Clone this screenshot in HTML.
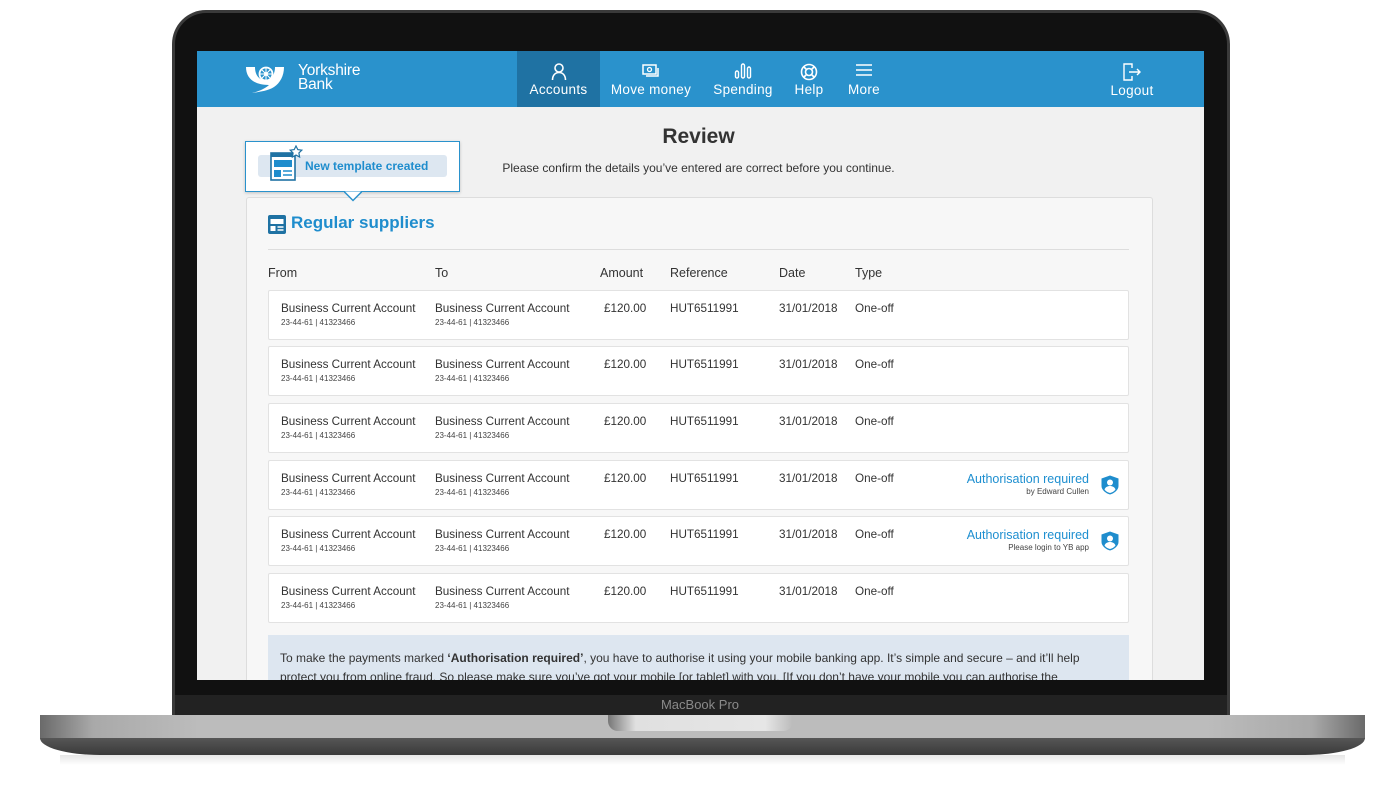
<!DOCTYPE html>
<html><head><meta charset="utf-8"><style>
*{margin:0;padding:0;box-sizing:border-box}
body{width:1400px;height:800px;background:#fff;position:relative;overflow:hidden;font-family:"Liberation Sans",sans-serif}
.abs{position:absolute}
#lid{left:172px;top:10px;width:1058px;height:706px;background:#3a3a3a;border-radius:34px 34px 0 0}
#lidin{left:175px;top:13px;width:1052px;height:703px;background:#111;border-radius:31px 31px 0 0}
#chin{left:175px;top:695px;width:1052px;height:21px;background:#222}
#mb{left:0;width:1400px;top:697px;text-align:center;color:#8a8a8a;font-size:13px}
#base{left:40px;top:715px;width:1325px;height:24px;background:linear-gradient(90deg,#6a6a6a 0%,#a9a9a9 4%,#bcbcbc 12%,#bcbcbc 88%,#a9a9a9 96%,#6a6a6a 100%)}
#base2{left:40px;top:738px;width:1325px;height:17px;background:linear-gradient(#565656,#3a3a3a);border-radius:0 0 60px 60px/0 0 17px 17px}
#shadow{left:60px;top:755px;width:1285px;height:10px;background:linear-gradient(#e6e6e6,#fff)}
#notch{left:608px;top:715px;width:185px;height:16px;background:linear-gradient(90deg,#777,#e0e0e0 15%,#e6e6e6 85%,#bbb);border-radius:0 0 10px 10px}
#screen{left:197px;top:51px;width:1007px;height:629px;background:#f1f1f1;overflow:hidden}
#hdr{left:0;top:0;width:1007px;height:56px;background:#2a92cc}
.nav{position:absolute;top:0;height:56px;color:#fff;font-size:13.5px;text-align:center;letter-spacing:.3px}
.nav span{position:absolute;left:0;right:0;top:31px}
.nav svg{position:absolute;top:12px;left:50%;transform:translateX(-50%)}
.t{position:absolute;font-size:11.7px;color:#333;white-space:nowrap}
.s{position:absolute;font-size:8px;color:#444;white-space:nowrap}
.row{position:absolute;left:71px;width:861px;height:50px;background:#fff;border:1px solid #e2e2e2;border-radius:2px}
.auth{position:absolute;right:39px;top:11px;text-align:right;color:#1e8fd0;font-size:12.5px}
.auth div{font-size:8px;color:#444;margin-top:1px}
</style></head><body>
<div class="abs" id="shadow"></div>
<div class="abs" id="lid"></div>
<div class="abs" id="lidin"></div>
<div class="abs" id="chin"></div>
<div class="abs" id="mb">MacBook Pro</div>
<div class="abs" id="base"></div>
<div class="abs" id="base2"></div>
<div class="abs" id="notch"></div>

<div class="abs" id="screen">
 <div class="abs" id="hdr"></div>
 <svg class="abs" style="left:48px;top:14px" width="46" height="30" viewBox="0 0 46 30">
  <path d="M1 2h9c0 8 4 13 10 13s10-5 10-13h9c0 9-4 16-10 20-6 4-16 5-22 6 8-2 14-5 17-8C10 20 1 14 1 2z" fill="#fff"/>
  <circle cx="21" cy="9" r="6.5" fill="none" stroke="#fff" stroke-width="1.8"/>
  <circle cx="21" cy="9" r="2" fill="#fff"/>
  <path d="M21 3v12M15 9h12M17 5l8 8M25 5l-8 8" stroke="#fff" stroke-width="1"/>
 </svg>
 <div class="abs" style="left:101px;top:13px;color:#fff;font-size:15.5px;line-height:14px;letter-spacing:-.2px">Yorkshire<br>Bank</div>
 <div class="nav" style="left:320px;width:83px;background:#1f72a3">
  <svg width="16" height="18" viewBox="0 0 16 18"><circle cx="8" cy="5" r="4" fill="none" stroke="#fff" stroke-width="1.6"/><path d="M1.5 17c0-5 3-7.5 6.5-7.5s6.5 2.5 6.5 7.5" fill="none" stroke="#fff" stroke-width="1.6"/></svg>
  <span>Accounts</span></div>
 <div class="nav" style="left:408px;width:92px">
  <svg width="18" height="16" viewBox="0 0 18 16"><rect x="1" y="2" width="13" height="9" fill="none" stroke="#fff" stroke-width="1.5"/><circle cx="7.5" cy="6.5" r="2" fill="none" stroke="#fff" stroke-width="1.3"/><path d="M16 5v8H4" fill="none" stroke="#fff" stroke-width="1.5"/></svg>
  <span>Move money</span></div>
 <div class="nav" style="left:512px;width:68px">
  <svg width="18" height="16" viewBox="0 0 18 16"><rect x="1.5" y="8" width="3" height="7" rx="1.5" fill="none" stroke="#fff" stroke-width="1.4"/><rect x="7.5" y="1" width="3" height="14" rx="1.5" fill="none" stroke="#fff" stroke-width="1.4"/><rect x="13.5" y="4" width="3" height="11" rx="1.5" fill="none" stroke="#fff" stroke-width="1.4"/></svg>
  <span>Spending</span></div>
 <div class="nav" style="left:592px;width:40px">
  <svg width="18" height="18" viewBox="0 0 18 18"><circle cx="9" cy="9" r="7.5" fill="none" stroke="#fff" stroke-width="1.6"/><circle cx="9" cy="9" r="3.5" fill="none" stroke="#fff" stroke-width="1.6"/><path d="M4 4l2.5 2.5M14 4l-2.5 2.5M4 14l2.5-2.5M14 14l-2.5-2.5" stroke="#fff" stroke-width="1.6"/></svg>
  <span>Help</span></div>
 <div class="nav" style="left:645px;width:44px">
  <svg width="18" height="14" viewBox="0 0 18 14"><path d="M1 2h16M1 7h16M1 12h16" stroke="#fff" stroke-width="1.5"/></svg>
  <span>More</span></div>
 <div class="nav" style="left:910px;width:50px">
  <svg width="20" height="18" viewBox="0 0 20 18"><path d="M10 5V1H2v16h8v-4" fill="none" stroke="#fff" stroke-width="1.4"/><path d="M7 9h11M15 6l3 3-3 3" fill="none" stroke="#fff" stroke-width="1.4"/></svg>
  <span style="top:32px">Logout</span></div>

 <div class="abs" style="left:0;width:1003px;top:74px;text-align:center;font-size:21px;font-weight:bold;color:#333">Review</div>
 <div class="abs" style="left:0;width:1003px;top:110px;text-align:center;font-size:12px;color:#333">Please confirm the details you’ve entered are correct before you continue.</div>

 <div class="abs" style="left:49px;top:146px;width:907px;height:500px;background:#f7f7f7;border:1px solid #ddd;border-radius:3px"></div>
 <svg class="abs" style="left:71px;top:164px" width="18" height="19" viewBox="0 0 18 19"><rect x="0" y="0" width="18" height="19" rx="2" fill="#1f72a3"/><rect x="2.5" y="4" width="13" height="5" fill="#fff"/><rect x="2.5" y="11" width="5" height="5" fill="#fff"/><path d="M9.5 12h6M9.5 15h6" stroke="#fff" stroke-width="1.4"/></svg>
 <div class="abs" style="left:94px;top:162px;font-size:17px;font-weight:bold;color:#1f8dcd">Regular suppliers</div>
 <div class="abs" style="left:71px;top:198px;width:861px;height:1px;background:#ddd"></div>

 <div class="t" style="left:71px;top:215px;font-size:12.5px">From</div>
 <div class="t" style="left:238px;top:215px;font-size:12.5px">To</div>
 <div class="t" style="left:403px;top:215px;font-size:12.5px">Amount</div>
 <div class="t" style="left:473px;top:215px;font-size:12.5px">Reference</div>
 <div class="t" style="left:582px;top:215px;font-size:12.5px">Date</div>
 <div class="t" style="left:658px;top:215px;font-size:12.5px">Type</div>

 <div class="row" style="top:239px"><div class="t" style="left:12px;top:11px">Business Current Account</div><div class="s" style="left:12px;top:27px">23-44-61 | 41323466</div><div class="t" style="left:166px;top:11px">Business Current Account</div><div class="s" style="left:166px;top:27px">23-44-61 | 41323466</div><div class="t" style="left:335px;top:11px">£120.00</div><div class="t" style="left:401px;top:11px">HUT6511991</div><div class="t" style="left:510px;top:11px">31/01/2018</div><div class="t" style="left:586px;top:11px">One-off</div></div>
 <div class="row" style="top:295px"><div class="t" style="left:12px;top:11px">Business Current Account</div><div class="s" style="left:12px;top:27px">23-44-61 | 41323466</div><div class="t" style="left:166px;top:11px">Business Current Account</div><div class="s" style="left:166px;top:27px">23-44-61 | 41323466</div><div class="t" style="left:335px;top:11px">£120.00</div><div class="t" style="left:401px;top:11px">HUT6511991</div><div class="t" style="left:510px;top:11px">31/01/2018</div><div class="t" style="left:586px;top:11px">One-off</div></div>
 <div class="row" style="top:352px"><div class="t" style="left:12px;top:11px">Business Current Account</div><div class="s" style="left:12px;top:27px">23-44-61 | 41323466</div><div class="t" style="left:166px;top:11px">Business Current Account</div><div class="s" style="left:166px;top:27px">23-44-61 | 41323466</div><div class="t" style="left:335px;top:11px">£120.00</div><div class="t" style="left:401px;top:11px">HUT6511991</div><div class="t" style="left:510px;top:11px">31/01/2018</div><div class="t" style="left:586px;top:11px">One-off</div></div>
 <div class="row" style="top:409px"><div class="t" style="left:12px;top:11px">Business Current Account</div><div class="s" style="left:12px;top:27px">23-44-61 | 41323466</div><div class="t" style="left:166px;top:11px">Business Current Account</div><div class="s" style="left:166px;top:27px">23-44-61 | 41323466</div><div class="t" style="left:335px;top:11px">£120.00</div><div class="t" style="left:401px;top:11px">HUT6511991</div><div class="t" style="left:510px;top:11px">31/01/2018</div><div class="t" style="left:586px;top:11px">One-off</div>
  <div class="auth">Authorisation required<div>by Edward Cullen</div></div>
  <svg class="abs" style="left:832px;top:14px" width="18" height="20" viewBox="0 0 18 20"><path d="M9 0.5L17.5 3.5V11C17.5 15 13 18.5 9 19.5 5 18.5 0.5 15 0.5 11V3.5z" fill="#1f8dcd"/><circle cx="9" cy="7.5" r="3" fill="#fff"/><path d="M3.5 14.5c1-2.5 3-3.5 5.5-3.5s4.5 1 5.5 3.5C13 16.5 11 17.5 9 18 7 17.5 5 16.5 3.5 14.5z" fill="#fff"/></svg></div>
 <div class="row" style="top:465px"><div class="t" style="left:12px;top:11px">Business Current Account</div><div class="s" style="left:12px;top:27px">23-44-61 | 41323466</div><div class="t" style="left:166px;top:11px">Business Current Account</div><div class="s" style="left:166px;top:27px">23-44-61 | 41323466</div><div class="t" style="left:335px;top:11px">£120.00</div><div class="t" style="left:401px;top:11px">HUT6511991</div><div class="t" style="left:510px;top:11px">31/01/2018</div><div class="t" style="left:586px;top:11px">One-off</div>
  <div class="auth">Authorisation required<div>Please login to YB app</div></div>
  <svg class="abs" style="left:832px;top:14px" width="18" height="20" viewBox="0 0 18 20"><path d="M9 0.5L17.5 3.5V11C17.5 15 13 18.5 9 19.5 5 18.5 0.5 15 0.5 11V3.5z" fill="#1f8dcd"/><circle cx="9" cy="7.5" r="3" fill="#fff"/><path d="M3.5 14.5c1-2.5 3-3.5 5.5-3.5s4.5 1 5.5 3.5C13 16.5 11 17.5 9 18 7 17.5 5 16.5 3.5 14.5z" fill="#fff"/></svg></div>
 <div class="row" style="top:522px"><div class="t" style="left:12px;top:11px">Business Current Account</div><div class="s" style="left:12px;top:27px">23-44-61 | 41323466</div><div class="t" style="left:166px;top:11px">Business Current Account</div><div class="s" style="left:166px;top:27px">23-44-61 | 41323466</div><div class="t" style="left:335px;top:11px">£120.00</div><div class="t" style="left:401px;top:11px">HUT6511991</div><div class="t" style="left:510px;top:11px">31/01/2018</div><div class="t" style="left:586px;top:11px">One-off</div></div>

 <div class="abs" style="left:71px;top:584px;width:861px;height:60px;background:#dde6f0;padding:14px 12px;font-size:12px;color:#333;line-height:19px">To make the payments marked <b>‘Authorisation required’</b>, you have to authorise it using your mobile banking app. It’s simple and secure – and it’ll help protect you from online fraud. So please make sure you’ve got your mobile [or tablet] with you. [If you don’t have your mobile you can authorise the</div>

 <div class="abs" style="left:48px;top:90px;width:215px;height:51px;background:#fff;border:1.5px solid #2a92cc;box-shadow:0 1px 3px rgba(0,0,0,.2)"></div>
 <svg class="abs" style="left:147px;top:140px" width="18" height="11" viewBox="0 0 18 11"><path d="M0 0.5L9 9.5 18 0.5" fill="#fff" stroke="#2a92cc" stroke-width="1.5"/></svg>
 <div class="abs" style="left:61px;top:104px;width:189px;height:22px;background:#dde7f1;border-radius:3px"></div>
 <svg class="abs" style="left:73px;top:94px" width="34" height="36" viewBox="0 0 34 36"><rect x="1" y="8" width="24" height="27" fill="#fff" stroke="#1f72a3" stroke-width="1.6"/><rect x="1" y="8" width="24" height="4" fill="#1f72a3"/><rect x="4" y="15" width="18" height="7" fill="#1f8dcd"/><rect x="4" y="25" width="7" height="7" fill="#1f8dcd"/><path d="M13 26h9M13 30h9" stroke="#1f8dcd" stroke-width="1.5"/><path d="M26 1l1.8 3.6 4 .6-2.9 2.8.7 4-3.6-1.9-3.6 1.9.7-4-2.9-2.8 4-.6z" fill="#fff" stroke="#1f72a3" stroke-width="1.2"/></svg>
 <div class="abs" style="left:108px;top:108px;font-size:12px;font-weight:bold;color:#1f8dcd">New template created</div>
</div>
</body></html>
